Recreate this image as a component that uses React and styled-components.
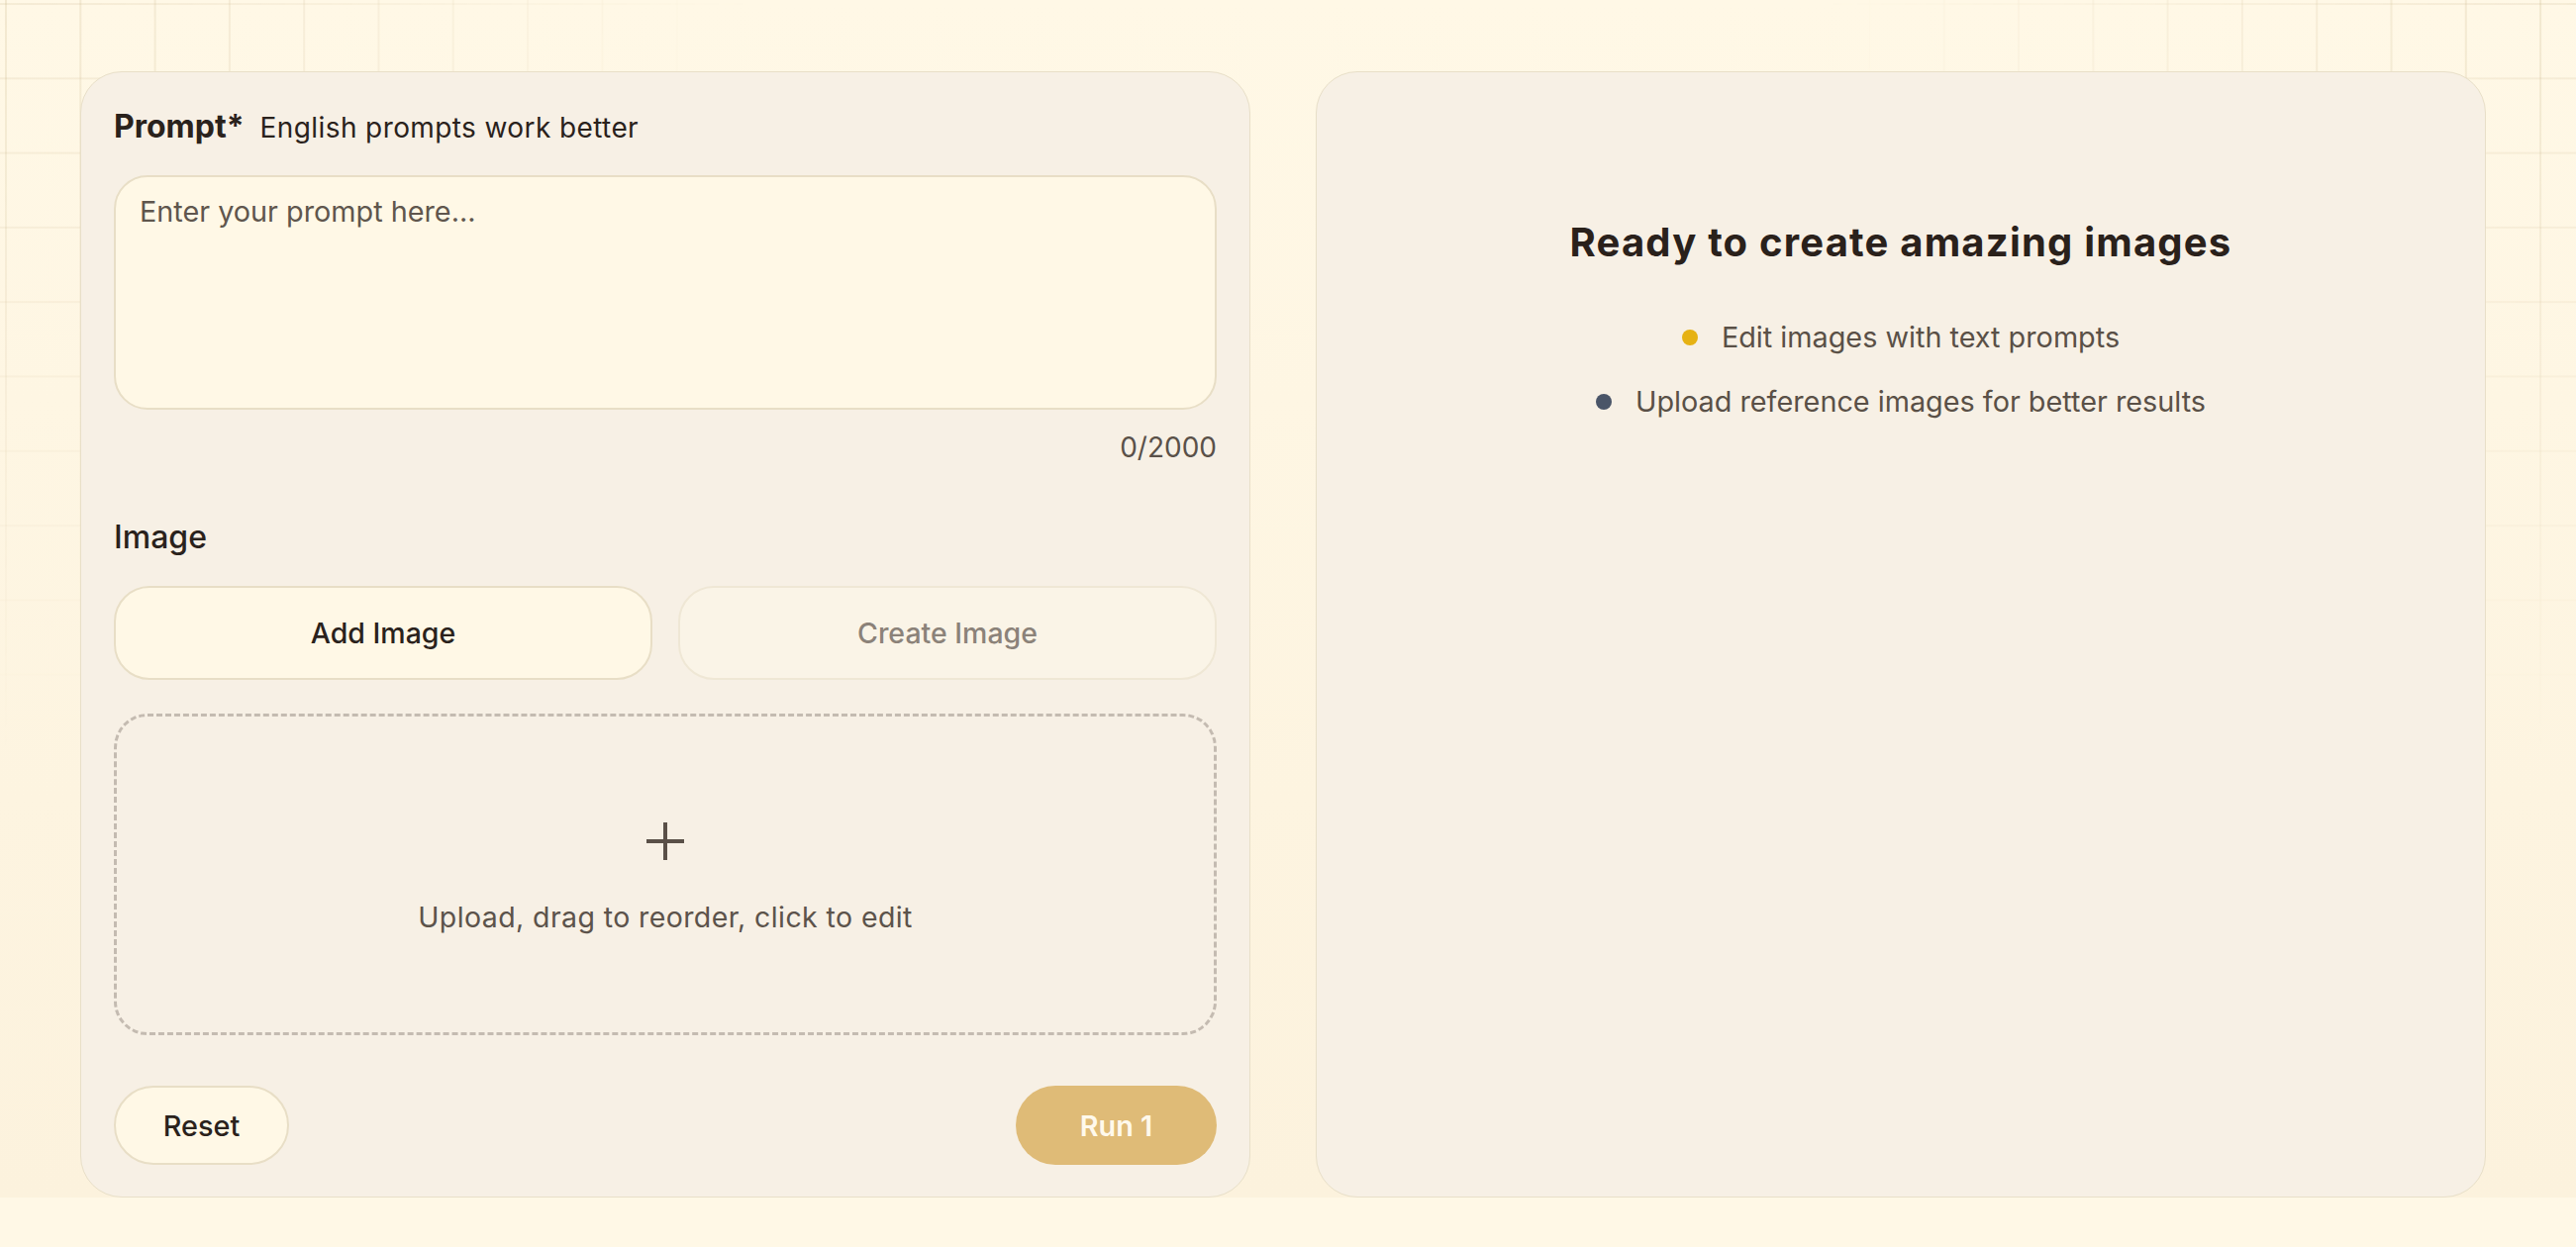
import React from "react"
import styled, { createGlobalStyle } from "styled-components"

const GlobalStyle = createGlobalStyle`
  * { box-sizing: border-box; }
  body {
    margin: 0;
    background: #fff8e6;
    font-family: Inter, "Noto Sans", "Liberation Sans", sans-serif;
    color: #2b231d;
  }
`

const Main = styled.main`
  position: relative;
  display: grid;
  grid-template-columns: 1182px 1182px;
  gap: 66px;
  padding: 72px 0 0 81px;
  background: linear-gradient(180deg, #fff8e6 0%, #fcf2dd 100%);

  /* faint grid, only visible toward the top corners */
  &::before {
    content: "";
    position: absolute;
    inset: 0;
    background-image:
      linear-gradient(to right, rgba(175, 150, 95, 0.17) 1.5px, transparent 1.5px),
      linear-gradient(to bottom, rgba(175, 150, 95, 0.13) 1.5px, transparent 1.5px);
    background-size: 75.3px 75.3px;
    background-position: 5px 3px;
    -webkit-mask-image:
      radial-gradient(circle at 0 0, #000 0, transparent 760px),
      radial-gradient(circle at 100% 0, #000 0, transparent 760px);
    mask-image:
      radial-gradient(circle at 0 0, #000 0, transparent 760px),
      radial-gradient(circle at 100% 0, #000 0, transparent 760px);
    pointer-events: none;
  }
`

const Card = styled.section`
  position: relative;
  z-index: 1;
  height: 1138px;
  background: #f7f0e5;
  border: 1.5px solid #e8dfc8;
  border-radius: 42px;
  display: flex;
  flex-direction: column;
  padding: ${(p) => (p.$preview ? "146px 33px 32px" : "31px 33px 32px")};
  align-items: ${(p) => (p.$preview ? "center" : "stretch")};
`

const LabelRow = styled.div`
  display: flex;
  align-items: baseline;
  gap: 16px;
  line-height: 1.5;
`

const Label = styled.span`
  font-size: 32px;
  font-weight: ${(p) => (p.$strong ? 700 : 500)};
  color: #2a221c;
`

const Hint = styled.span`
  font-size: 28px;
  letter-spacing: 0.4px;
  color: #2a221c;
`

const PromptInput = styled.textarea`
  margin-top: 25px;
  height: 237px;
  resize: none;
  border: 2px solid #e8dec6;
  border-radius: 34px;
  background: #fff8e6;
  padding: 13px 24px;
  font-family: inherit;
  font-size: 28.8px;
  line-height: 1.5;
  color: #2b231d;
  outline: none;

  &::placeholder {
    color: #5f564d;
  }
`

const Counter = styled.div`
  margin-top: 17px;
  text-align: right;
  font-size: 28px;
  line-height: 1.5;
  color: #5a5149;
`

const SectionLabel = styled.div`
  margin-top: 46px;
  line-height: 1.5;
`

const TabRow = styled.div`
  margin-top: 25px;
  display: grid;
  grid-template-columns: 1fr 1fr;
  gap: 26px;
`

const TabButton = styled.button`
  height: 95px;
  border-radius: 36px;
  border: 2px solid ${(p) => (p.$active ? "#e8dec6" : "#efe7d5")};
  background: ${(p) => (p.$active ? "#fff8e6" : "#faf4e7")};
  color: ${(p) => (p.$active ? "#2a221c" : "#8b8279")};
  font-family: inherit;
  font-size: 28.5px;
  font-weight: 500;
  cursor: pointer;
`

const DropZone = styled.div`
  margin-top: 34px;
  height: 325px;
  border: 3px dashed #c4bbb1;
  border-radius: 34px;
  display: flex;
  flex-direction: column;
  align-items: center;
  justify-content: center;
  gap: 40px;
  padding-top: 8px;
  color: #5c534b;
  font-size: 28.5px;
  letter-spacing: 0.4px;
`

const Footer = styled.div`
  margin-top: auto;
  display: flex;
  justify-content: space-between;
  align-items: center;
`

const PillButton = styled.button`
  height: 80px;
  width: ${(p) => (p.$primary ? "203px" : "177px")};
  border-radius: 40px;
  border: ${(p) => (p.$primary ? "none" : "2px solid #e8dec6")};
  background: ${(p) => (p.$primary ? "#dfbb77" : "#fff8e6")};
  color: ${(p) => (p.$primary ? "#fff9ec" : "#2a221c")};
  font-family: inherit;
  font-size: 28.8px;
  font-weight: ${(p) => (p.$primary ? 600 : 500)};
  cursor: pointer;
`

const Heading = styled.h2`
  margin: 0;
  font-size: 40px;
  font-weight: 700;
  letter-spacing: 1.2px;
  line-height: 1.3;
  color: #2a211b;
`

const Features = styled.ul`
  list-style: none;
  margin: 48px 0 0;
  padding: 0;
  display: flex;
  flex-direction: column;
  align-items: center;
  gap: 22px;
`

const Feature = styled.li`
  display: flex;
  align-items: center;
  gap: 24px;
  font-size: 28.8px;
  line-height: 1.5;
  color: #5a5047;
`

const Dot = styled.span`
  width: 16px;
  height: 16px;
  border-radius: 50%;
  background: ${(p) => p.$color};
  flex-shrink: 0;
`

function PlusIcon() {
  return (
    <svg width="38" height="38" viewBox="0 0 38 38" fill="none">
      <path d="M19 0v38M0 19h38" stroke="#5a5048" strokeWidth="4" />
    </svg>
  )
}

export default function App() {
  return (
    <>
      <GlobalStyle />
      <Main>
        <Card>
          <LabelRow>
            <Label $strong>Prompt*</Label>
            <Hint>English prompts work better</Hint>
          </LabelRow>
          <PromptInput placeholder="Enter your prompt here..." />
          <Counter>0/2000</Counter>

          <SectionLabel>
            <Label>Image</Label>
          </SectionLabel>
          <TabRow>
            <TabButton $active>Add Image</TabButton>
            <TabButton>Create Image</TabButton>
          </TabRow>
          <DropZone>
            <PlusIcon />
            <span>Upload, drag to reorder, click to edit</span>
          </DropZone>

          <Footer>
            <PillButton>Reset</PillButton>
            <PillButton $primary>Run 1</PillButton>
          </Footer>
        </Card>

        <Card $preview>
          <Heading>Ready to create amazing images</Heading>
          <Features>
            <Feature>
              <Dot $color="#e6b214" />
              Edit images with text prompts
            </Feature>
            <Feature>
              <Dot $color="#4a5568" />
              Upload reference images for better results
            </Feature>
          </Features>
        </Card>
      </Main>
    </>
  )
}
